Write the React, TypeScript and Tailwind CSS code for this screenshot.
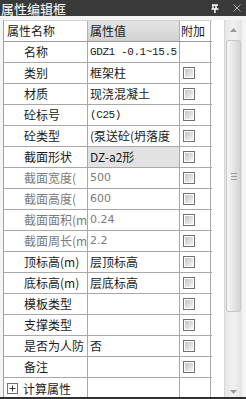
import { Plus } from 'lucide-react';

type Row = {
  name: string;
  value?: string;
  dim?: boolean;
  mono?: boolean;
  shaded?: boolean;
  check?: boolean;
};

const rows: Row[] = [
  { name: '名称', value: 'GDZ1 -0.1~15.5', mono: true, check: false },
  { name: '类别', value: '框架柱', check: true },
  { name: '材质', value: '现浇混凝土', check: true },
  { name: '砼标号', value: '(C25)', mono: true, check: true },
  { name: '砼类型', value: '(泵送砼(坍落度', check: true },
  { name: '截面形状', value: 'DZ-a2形', shaded: true, check: true },
  { name: '截面宽度(', value: '500', dim: true, check: true },
  { name: '截面高度(', value: '600', dim: true, check: true },
  { name: '截面面积(m', value: '0.24', dim: true, check: true },
  { name: '截面周长(m', value: '2.2', dim: true, check: true },
  { name: '顶标高(m)', value: '层顶标高', check: true },
  { name: '底标高(m)', value: '层底标高', check: true },
  { name: '模板类型', value: '', check: true },
  { name: '支撑类型', value: '', check: true },
  { name: '是否为人防', value: '否', check: true },
  { name: '备注', value: '', check: true },
];

const cjk = "font-['Noto_Sans_CJK_SC','Noto_Sans',sans-serif]";

function Checkbox() {
  return (
    <div className="w-[12px] h-[12px] border border-[#707070] bg-white p-[1px]">
      <div className="w-full h-full bg-gradient-to-br from-[#c4c4c4] to-[#f4f4f4]" />
    </div>
  );
}

export default function App() {
  return (
    <div className={`w-[246px] h-[399px] bg-white flex flex-col overflow-hidden ${cjk}`}>
      {/* Title bar */}
      <div className="h-[16px] shrink-0 bg-[#3a3a3a] flex items-center text-white">
        <span className="text-[13px] leading-none pl-[1px]">属性编辑框</span>
        <div className="ml-auto flex items-center gap-[14px] pr-[5px]">
          <svg width="8" height="9" viewBox="0 0 8 9" className="text-white">
            <path d="M1 1h6M2 1v4M5 1v4M0.5 5h7M4 5v4" stroke="currentColor" strokeWidth="1.4" fill="none" />
          </svg>
          <svg width="8" height="8" viewBox="0 0 8 8" className="text-[#b0b0b0]">
            <path d="M0.5 0.5L7.5 7.5M7.5 0.5L0.5 7.5" stroke="currentColor" strokeWidth="1" />
          </svg>
        </div>
      </div>

      <div className="flex-1 flex min-h-0 pt-[4px] pl-[3px] bg-[#f4f4f4]">
        {/* Grid */}
        <div className="w-[209px] bg-white border-l border-[#a0a0a0] overflow-hidden text-[12px] text-[#1a1a1a]">
          <div className="h-[22px] grid grid-cols-[84px_92px_31px] border-b border-[#9a9a9a] border-t border-t-[#d0d0d0]">
            <div className="flex items-center pl-[3px] border-r border-[#b0b0b0] bg-white">属性名称</div>
            <div className="flex items-center pl-[2px] border-r border-[#b0b0b0] bg-gradient-to-b from-[#e4e4e4] to-[#d2d2d2]">属性值</div>
            <div className="flex items-center pl-[1px] border-r border-[#b0b0b0] bg-white">附加</div>
          </div>
          {rows.map((r) => (
            <div key={r.name} className="h-[21px] grid grid-cols-[84px_92px_31px] border-b border-[#a8a8a8]">
              <div className={`flex items-center pl-[20px] border-r border-[#a8a8a8] whitespace-nowrap overflow-hidden ${r.dim ? 'text-[#7a7a7a]' : ''}`}>
                {r.name}
              </div>
              <div
                className={`flex items-center pl-[2px] border-r border-[#a8a8a8] whitespace-nowrap overflow-hidden ${r.shaded ? 'bg-[#e2e2e2]' : ''} ${r.dim ? "text-[#7a7a7a] text-[11px] font-['DejaVu_Sans',sans-serif]" : ''} ${r.mono ? "font-['Liberation_Mono',monospace] text-[11px] tracking-[-0.4px]" : ''}`}
              >
                {r.value}
              </div>
              <div className="flex items-center pl-[3px] border-r border-[#a8a8a8]">
                {r.check && <Checkbox />}
              </div>
            </div>
          ))}
          <div className="h-[21px] grid grid-cols-[84px_92px_31px]">
            <div className="flex items-center gap-[5px] pl-[3px] border-r border-[#a8a8a8]">
              <div className="w-[11px] h-[11px] border border-[#707070] flex items-center justify-center bg-white">
                <Plus size={9} strokeWidth={2} className="text-black" />
              </div>
              计算属性
            </div>
            <div className="border-r border-[#a8a8a8]" />
            <div className="border-r border-[#a8a8a8]" />
          </div>
        </div>

        <div className="w-[12px] bg-white" />

        {/* Scrollbar */}
        <div className="w-[18px] flex flex-col bg-gradient-to-r from-[#e6e6e6] via-[#f2f2f2] to-[#e2e2e2] border-l border-[#d8d8d8]">
          <div className="h-[20px] flex items-center justify-center">
            <svg width="7" height="4" viewBox="0 0 7 4"><path d="M0 4L3.5 0L7 4Z" fill="#9a9a9a" /></svg>
          </div>
          <div className="h-[272px] mx-[1px] border border-[#c8c8c8] rounded-[2px] bg-gradient-to-r from-[#f6f6f6] via-[#e6e6e6] to-[#d4d4d4] flex items-center justify-center">
            <div className="flex flex-col gap-[2px]">
              <div className="w-[6px] h-[1px] bg-[#9a9a9a]" />
              <div className="w-[6px] h-[1px] bg-[#9a9a9a]" />
              <div className="w-[6px] h-[1px] bg-[#9a9a9a]" />
            </div>
          </div>
          <div className="flex-1 flex items-end justify-center pb-[3px]">
            <svg width="7" height="4" viewBox="0 0 7 4"><path d="M0 0L3.5 4L7 0Z" fill="#9a9a9a" /></svg>
          </div>
        </div>
        <div className="w-[4px] bg-[#f4f4f4]" />
      </div>
      <div className="h-[2px] shrink-0 bg-[#303030]" />
    </div>
  );
}
